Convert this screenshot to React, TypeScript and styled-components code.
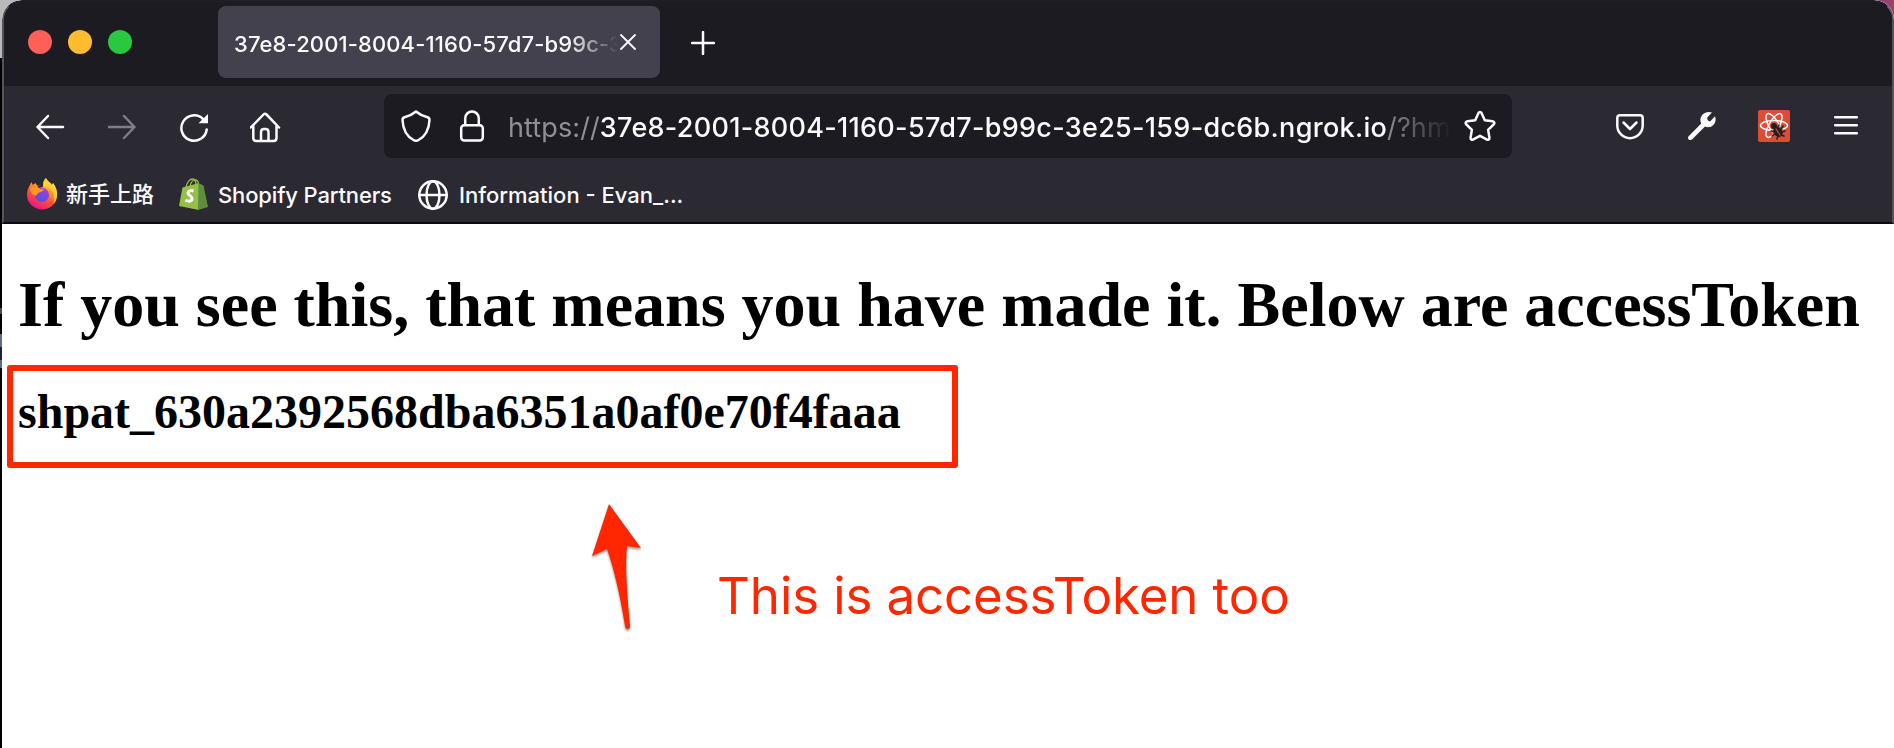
import React from 'react';
import styled, { createGlobalStyle } from 'styled-components';

const Global = createGlobalStyle`
  * { box-sizing: border-box; }
  html, body { margin: 0; padding: 0; background: #fff; }
  body { overflow: hidden; }
`;

const Desktop = styled.div`
  width: 1894px;
  height: 748px;
  padding-left: 2px;
  overflow: hidden;
  background: linear-gradient(90deg, transparent 50%, #98446f 50%) 0 0 / 100% 20px no-repeat,
    linear-gradient(#b9b9bb 58px, #000 58px, #000 308px, #4a4b50 308px, #4a4b50 314px, #000 314px,
      #000 334px, #5b6b8c 334px, #5b6b8c 347px, #1b2233 347px, #1b2233 360px, #5b6b8c 360px, #5b6b8c 368px, #000 368px);
`;

const BrowserWindow = styled.div`
  height: 748px;
  border-radius: 20px 20px 0 0;
  overflow: hidden;
  background: #fff;
`;

const Chrome = styled.header`
  height: 224px;
  border: 2px solid #55545a;
  border-top-color: #1f1e25;
  border-bottom: 2px solid #0c0c0d;
  border-radius: 20px 20px 0 0;
  background: #2b2a33;
  color: #fbfbfe;
  font-family: Inter, "Noto Sans CJK SC", sans-serif;
  overflow: hidden;
`;

const TabStrip = styled.div`
  height: 84px;
  display: flex;
  align-items: flex-start;
  padding: 4px 0 0 24px;
  background: #1c1b22;
`;

const Lights = styled.div`
  display: flex;
  gap: 16px;
  width: 190px;
  padding-top: 24px;
`;

const Light = styled.span<{ $color: string }>`
  width: 24px;
  height: 24px;
  border-radius: 50%;
  background: ${(p) => p.$color};
`;

const Tab = styled.div`
  width: 442px;
  height: 72px;
  padding: 0 24px 0 16px;
  display: flex;
  align-items: center;
  border-radius: 8px;
  background: #42414d;
`;

const TabTitle = styled.span`
  flex: none;
  width: 386px;
  overflow: hidden;
  white-space: nowrap;
  font-size: 22px;
  font-weight: 500;
  line-height: 32px;
  padding-top: 4px;
  letter-spacing: 0.12px;
  mask-image: linear-gradient(90deg, #000 334px, transparent 384px);
`;

const NewTab = styled.div`
  padding: 25px 0 0 31px;
  line-height: 0;
`;

const Toolbar = styled.div`
  height: 80px;
  display: flex;
  align-items: center;
`;

const Navigation = styled.div`
  width: 380px;
  display: flex;
  gap: 40px;
  padding: 2px 0 0 30px;
`;

const UrlBar = styled.div`
  width: 1128px;
  height: 64px;
  display: flex;
  align-items: center;
  padding-left: 16px;
  border-radius: 8px;
  background: #1c1b22;
`;

const SiteIcons = styled.div`
  display: flex;
  gap: 24px;
`;

const Url = styled.span`
  width: 948px;
  margin: 0 8px 0 20px;
  padding-top: 3px;
  overflow: hidden;
  white-space: nowrap;
  font-size: 27px;
  line-height: 40px;
  letter-spacing: 0.1px;
  color: #8f8f94;
  mask-image: linear-gradient(90deg, #000 878px, transparent 944px);
`;

const Host = styled.b`
  font-weight: 500;
  letter-spacing: 0.3px;
  color: #fbfbfe;
`;

const Actions = styled.div`
  display: flex;
  align-items: center;
  gap: 40px;
  padding-left: 102px;
`;

const Icon = styled.svg<{ $size?: number }>`
  flex: none;
  display: block;
  width: ${(p) => p.$size ?? 32}px;
  height: ${(p) => p.$size ?? 32}px;
  fill: none;
  stroke: #fbfbfe;
  stroke-width: 2.5;
  stroke-linecap: round;
  stroke-linejoin: round;
`;

const Bookmarks = styled.nav`
  height: 56px;
  display: flex;
  align-items: center;
  padding-left: 22px;
`;

const Bookmark = styled.a<{ $width: number; $gap?: number; $tracking?: number }>`
  width: ${(p) => p.$width}px;
  display: flex;
  align-items: center;
  gap: ${(p) => p.$gap ?? 8}px;
  white-space: nowrap;
  font-size: 22px;
  font-weight: 500;
  line-height: 32px;
  letter-spacing: ${(p) => p.$tracking ?? 0}px;
`;

const Label = styled.span`
  padding-top: 2px;
`;

const Page = styled.main`
  position: relative;
  height: 524px;
  padding: 44px 16px 0;
  color: #000;
  font-family: "Liberation Serif", serif;
`;

const Title = styled.h1`
  margin: 0;
  font-size: 64px;
  line-height: 74px;
  white-space: nowrap;
`;

const Token = styled.h2`
  margin: 42px 0 0;
  font-size: 48px;
  line-height: 56px;
`;

const Highlight = styled.div`
  position: absolute;
  left: 5px;
  top: 140.5px;
  width: 951px;
  height: 103.5px;
  border: 6px solid #ff2600;
  border-radius: 3px;
`;

const Pointer = styled.svg`
  position: absolute;
  left: 582px;
  top: 272px;
  width: 64px;
  height: 144px;
  filter: drop-shadow(0 2px 1px rgba(0, 0, 0, 0.4));
`;

const Note = styled.p`
  position: absolute;
  left: 715px;
  top: 341px;
  margin: 0;
  color: #ff2600;
  font: 400 51px/62px Inter, sans-serif;
  letter-spacing: -0.1px;
  white-space: nowrap;
`;

const FirefoxLogo = () => (
  <Icon viewBox="0 0 32 32">
    <defs>
      <linearGradient id="flame" x1="0.8" y1="0" x2="0.3" y2="1">
        <stop offset="0" stopColor="#fff44f" />
        <stop offset="0.35" stopColor="#ffa01f" />
        <stop offset="0.65" stopColor="#ff4a3f" />
        <stop offset="1" stopColor="#e5128b" />
      </linearGradient>
      <linearGradient id="orb" x1="0.8" y1="0" x2="0.2" y2="1">
        <stop offset="0" stopColor="#a63be8" />
        <stop offset="1" stopColor="#4b54d8" />
      </linearGradient>
    </defs>
    <g stroke="none">
      <path fill="url(#flame)" d="M20 0c1 3 4 4 6 7l1-2c3 4 4.500 8 4 13-.8 8-7 13.500-15 13.500S1 25 1 17c0-4 1-7 3-10 .2-1 1-2 2-3 0 1 .1 2 .8 3 1.500-1 2-1.500 3-2 .2 1 .8 2 2 2.800L17 7c0-3 1-5 3-7z" />
      <path fill="#2b2a33" d="m11.500 8 5-1.500 1-2-.7 4.500-4 1z" />
      <path fill="#ffd83a" d="M20 0c1 3 4 4 6 7l1-2c3 4 4.500 8 4 13-.3 3-1.500 5.500-3 7.500C29 17 27 12 21 9c-2.500-.5-4-1-4-2 0-3 1-5 3-7z" opacity=".75" />
      <circle cx="16" cy="17" r="7" fill="url(#orb)" />
      <path fill="#ff9a1e" d="M4 10c4-2 8-1 10 1l4 .5c-1 2-3 2.500-5 3-2 1-2 3-4 3-3-1-5-4-5-7.500z" />
    </g>
  </Icon>
);

const ShopifyLogo = () => (
  <Icon viewBox="0 0 32 32">
    <path stroke="#95bf47" strokeWidth="1.300" d="M8 9c1-5 4-8 6.500-8 3 0 3.500 4 3.500 7M12 8c1-4 3.500-6.500 6-6 2 .5 2.500 3 2.500 5" />
    <path stroke="none" fill="#95bf47" d="M4.500 9.500 21 5v27L1 28z" />
    <path stroke="none" fill="#5e8e3e" d="m20.500 5 5 2.500L30 29l-10 3z" />
    <path stroke="#fff" strokeWidth="3" strokeLinecap="butt" d="M15.500 13c-3-1.300-5.500 0-5.500 2 0 2.500 4 2.800 4 5.500 0 3-3.500 3.500-6.500 1.500" />
  </Icon>
);

const GlobeIcon = () => (
  <Icon viewBox="0 0 32 32">
    <circle cx="16" cy="17" r="13.700" />
    <ellipse cx="16" cy="17" rx="6.500" ry="13.700" />
    <path d="M2.300 17h27.400" />
  </Icon>
);

const ReactDevIcon = () => (
  <Icon viewBox="0 0 32 32">
    <rect width="32" height="32" rx="2" fill="#dd4b39" stroke="none" />
    <g strokeWidth="1.500">
      <ellipse cx="16" cy="15.500" rx="13.500" ry="5" />
      <ellipse cx="16" cy="15.500" rx="13.500" ry="5" transform="rotate(60 16 15.500)" />
      <ellipse cx="16" cy="15.500" rx="13.500" ry="5" transform="rotate(120 16 15.500)" />
    </g>
    <path stroke="none" fill="#dd4b39" d="m14 21 8-5 7 8-5 6-8-1z" />
    <g fill="#231f20" stroke="#231f20" strokeWidth="1.500">
      <circle cx="16" cy="16" r="2.200" />
      <ellipse cx="20" cy="22" rx="3.400" ry="4.600" transform="rotate(-38 20 22)" />
      <path d="m13 21 3 .5M14 26l3-2M19 29l1-3M20 17l1-2M23 19l2-3M24 22l3-1M23 25l3 1" />
    </g>
    <path stroke="#dd4b39" strokeWidth="1.200" d="m18 19 4 6" />
  </Icon>
);

export default function App() {
  return (
    <>
      <Global />
      <Desktop>
        <BrowserWindow>
          <Chrome>
            <TabStrip>
              <Lights>
                <Light $color="#ff5f57" />
                <Light $color="#febc2e" />
                <Light $color="#28c840" />
              </Lights>
              <Tab>
                <TabTitle>37e8-2001-8004-1160-57d7-b99c-3</TabTitle>
                <Icon $size={16} viewBox="0 0 16 16">
                  <path strokeWidth="1.800" d="m1 1 14 14M15 1 1 15" />
                </Icon>
              </Tab>
              <NewTab>
                <Icon $size={24} viewBox="0 0 24 24">
                  <path d="M12 1v22M1 12h22" />
                </Icon>
              </NewTab>
            </TabStrip>
            <Toolbar>
              <Navigation>
                <Icon viewBox="0 0 32 32">
                  <path d="M29 16H3.500M14 5 3.500 16 14 27" />
                </Icon>
                <Icon viewBox="0 0 32 32" opacity="0.4">
                  <path d="M3 16h25.500M18 5l10.500 11L18 27" />
                </Icon>
                <Icon viewBox="0 0 32 32">
                  <path d="M28.700 18.500A12.700 12.700 0 1 1 25 8" />
                  <path stroke="none" fill="#fbfbfe" d="M30 3v9.200H20.500z" />
                </Icon>
                <Icon viewBox="1.500 0 32 32">
                  <path d="M2.300 16.500 15 3.500q1.500-1.500 3 0L30.500 16.500M4.800 15v12q0 3 3 3h17.200q3 0 3-3V15M12.500 29.500V21q0-3 3-3h1.500q3 0 3 3V29.500" />
                </Icon>
              </Navigation>
              <UrlBar>
                <SiteIcons>
                  <Icon viewBox="0 0 32 32">
                    <path d="M16 1.500c-3.500 3-7.500 4.800-11.500 5.800Q2.500 8 2.500 10C3 20 7 26.500 13.500 30q2.500 1.500 5 0C25 26.500 29 20 29.500 10q0-2-2-2.700C23.500 6.300 19.500 4.500 16 1.500z" />
                  </Icon>
                  <Icon viewBox="0 0 32 32">
                    <rect x="5.200" y="15.200" width="21.600" height="15.300" rx="3" />
                    <path d="M9.200 15V8.300a6.800 6.800 0 0 1 13.600 0V15" />
                  </Icon>
                </SiteIcons>
                <Url>
                  https://<Host>37e8-2001-8004-1160-57d7-b99c-3e25-159-dc6b.ngrok.io</Host>/?hm
                </Url>
                <Icon viewBox="0 0 32 32">
                  <path d="m14.400 3.200-3.200 7-7.600 1c-2 .3-2.500 2-1.200 3.300l5.500 5.300-1.300 7.600c-.3 2 1.200 3 2.800 2L16 25.800l6.600 3.600c1.600 1 3.100 0 2.800-2l-1.300-7.600 5.500-5.300c1.300-1.300.8-3-1.200-3.300l-7.600-1-3.200-7c-.8-1.500-2.400-1.500-3.200 0z" />
                </Icon>
              </UrlBar>
              <Actions>
                <Icon viewBox="0 0 32 32">
                  <path d="M6 5.300h20q2.700 0 2.700 2.700v7.500a12.700 12.700 0 0 1-25.400 0V8q0-2.700 2.700-2.700zM9.500 12.500 16 19l6.500-6.500" />
                </Icon>
                <Icon viewBox="0 0 32 32">
                  <path stroke="none" fill="#fbfbfe" d="M23 2c1 0 2 .2 3 .6l-4.700 5c-.5 1.500.7 3.700 2.700 3.800l5-5.200c2 5-1 10.800-7 11-1.200 0-2-.2-3-.6L6 29.600c-2.300 1.500-5-.8-3.600-3.200L15.200 13.500C12.500 7.500 17 2 23 2z" />
                </Icon>
                <ReactDevIcon />
                <Icon viewBox="0 0 32 32">
                  <path d="M5.200 7.300h21.600M5.200 15.300h21.600M5.200 23.300h21.600" />
                </Icon>
              </Actions>
            </Toolbar>
            <Bookmarks>
              <Bookmark $width={152}><FirefoxLogo />新手上路</Bookmark>
              <Bookmark $width={239} $tracking={-0.15}><ShopifyLogo /><Label>Shopify Partners</Label></Bookmark>
              <Bookmark $width={300} $gap={10}><GlobeIcon /><Label>Information - Evan_...</Label></Bookmark>
            </Bookmarks>
          </Chrome>
          <Page>
            <Title>If you see this, that means you have made it. Below are accessToken</Title>
            <Token>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</Token>
            <Highlight />
            <Pointer viewBox="0 0 64 144">
              <path fill="#ff2600" d="M25 8 57 52 43 50C41 72 43 96 46 130q.3 3-2.500 3-2 0-2.500-3C36 99 30 73 23 53L8 60z" />
            </Pointer>
            <Note>This is accessToken too</Note>
          </Page>
        </BrowserWindow>
      </Desktop>
    </>
  );
}
